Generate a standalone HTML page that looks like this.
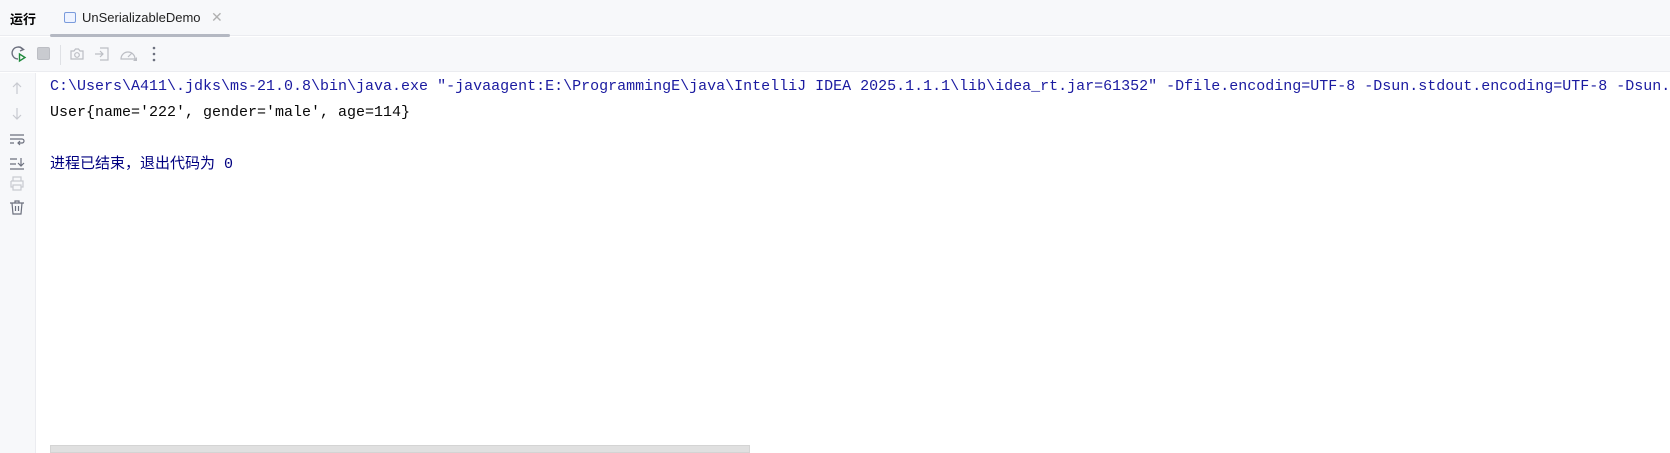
<!DOCTYPE html>
<html><head><meta charset="utf-8"><style>
*{margin:0;padding:0;box-sizing:border-box}
body{width:1670px;height:453px;overflow:hidden;background:#fff;font-family:"Liberation Sans","Noto Sans CJK SC",sans-serif;position:relative}
.tabbar{position:absolute;left:0;top:0;width:1670px;height:36px;background:#f7f8fa;border-bottom:1px solid #ebecf0}
.run{position:absolute;left:10px;top:9px;font-size:13px;color:#000;font-weight:bold}
.tab{position:absolute;left:50px;top:0;width:180px;height:36px}
.tab .ico{position:absolute;left:14px;top:12px;width:12px;height:11px;border:1px solid #7a9bdc;border-radius:2px;background:#eef3ff}
.tab .t{position:absolute;left:32px;top:10px;font-size:13px;color:#222}
.tab .x{position:absolute;left:161px;top:9px;font-size:14px;color:#b0b0b0}
.tab .ul{position:absolute;left:0;bottom:-1px;width:180px;height:3px;background:#b4b8c2;border-radius:2px}
.toolbar{position:absolute;left:0;top:37px;width:1670px;height:35px;background:#f7f8fa;border-bottom:1px solid #ebecf0}
.gutter{position:absolute;left:0;top:73px;width:36px;height:380px;background:#f7f8fa;border-right:1px solid #ebecf0}
.con{position:absolute;left:50px;top:74px;width:1620px;overflow:hidden;font-family:"Liberation Mono","Noto Sans CJK SC",monospace;font-size:15px;line-height:26px;white-space:pre}
.b{color:#1a1aa0}.k{color:#080808}.n{color:#000080}
.sb{position:absolute;left:50px;top:445px;width:700px;height:8px;background:#e0e0e0;border:1px solid #d4d4d4}
svg{position:absolute}
</style></head><body>
<div class="tabbar"><div class="run">运行</div>
<div class="tab"><div class="ico"></div><div class="t">UnSerializableDemo</div><div class="x">✕</div><div class="ul"></div></div></div>
<div class="toolbar">
<svg style="left:10px;top:8px" width="18" height="18" viewBox="0 0 18 18"><path d="M13 4.5A6 6 0 1 0 8 14" fill="none" stroke="#6c707e" stroke-width="1.4"/><path d="M10 2l3.5 2.5L10 6" fill="none" stroke="#6c707e" stroke-width="1.4"/><path d="M9.5 9v7l5.5-3.5z" fill="none" stroke="#208a3c" stroke-width="1.4"/></svg>
<svg style="left:37px;top:10px" width="13" height="13"><rect x="0.5" y="0.5" width="12" height="12" rx="1.5" fill="#c9cbd0" stroke="#bcbec4"/></svg>
<div style="position:absolute;left:60px;top:8px;width:1px;height:20px;background:#dfe1e5"></div>
<svg style="left:69px;top:9px" width="16" height="16" viewBox="0 0 16 16"><path d="M2 5h3l1.5-2h3L11 5h3v8H2z" fill="none" stroke="#bcbec4" stroke-width="1.2"/><circle cx="8" cy="9" r="2.3" fill="none" stroke="#bcbec4" stroke-width="1.2"/></svg>
<svg style="left:94px;top:9px" width="16" height="16" viewBox="0 0 16 16"><path d="M6 2h8v12H6" fill="none" stroke="#bcbec4" stroke-width="1.2"/><path d="M1 8h8M6 5l3 3-3 3" fill="none" stroke="#bcbec4" stroke-width="1.2"/></svg>
<svg style="left:119px;top:9px" width="18" height="16" viewBox="0 0 18 16"><path d="M2 13a7 7 0 1 1 14 0z" fill="none" stroke="#bcbec4" stroke-width="1.2"/><path d="M9 11l4-4" stroke="#bcbec4" stroke-width="1.2"/><path d="M14 15h4v-4z" fill="#bcbec4"/></svg>
<svg style="left:152px;top:9px" width="4" height="16"><circle cx="2" cy="2" r="1.3" fill="#6c707e"/><circle cx="2" cy="8" r="1.3" fill="#6c707e"/><circle cx="2" cy="14" r="1.3" fill="#6c707e"/></svg>
</div>
<div class="gutter">
<svg style="left:10px;top:8px" width="14" height="14" viewBox="0 0 14 14"><path d="M7 13V2M3 6l4-4 4 4" fill="none" stroke="#c8cad0" stroke-width="1.2"/></svg>
<svg style="left:10px;top:34px" width="14" height="14" viewBox="0 0 14 14"><path d="M7 1v11M3 8l4 4 4-4" fill="none" stroke="#c8cad0" stroke-width="1.2"/></svg>
<svg style="left:9px;top:60px" width="16" height="14" viewBox="0 0 16 14"><path d="M1 2h14M1 6h12a2 2 0 0 1 0 4H9M11 8l-2 2 2 2M1 10h4" fill="none" stroke="#6c707e" stroke-width="1.2"/></svg>
<svg style="left:9px;top:84px" width="16" height="14" viewBox="0 0 16 14"><path d="M1 2h7M1 7h6M1 12h14M12 1v8M9 6l3 3 3-3" fill="none" stroke="#6c707e" stroke-width="1.2"/></svg>
<svg style="left:9px;top:103px" width="16" height="15" viewBox="0 0 16 15"><path d="M4 5V1h8v4M2 5h12v6h-2M4 11H2V5M4 9h8v5H4z" fill="none" stroke="#c8cad0" stroke-width="1.2"/></svg>
<svg style="left:9px;top:126px" width="16" height="16" viewBox="0 0 16 16"><path d="M1 4h14M6 4V2h4v2M3 4l1 11h8l1-11M6.5 7v5M9.5 7v5" fill="none" stroke="#6c707e" stroke-width="1.2"/></svg>
</div>
<div class="con"><span class="b">C:\Users\A411\.jdks\ms-21.0.8\bin\java.exe "-javaagent:E:\ProgrammingE\java\IntelliJ IDEA 2025.1.1.1\lib\idea_rt.jar=61352" -Dfile.encoding=UTF-8 -Dsun.stdout.encoding=UTF-8 -Dsun.</span>
<span class="k">User{name='222', gender='male', age=114}</span>

<span class="n">进程已结束，退出代码为 0</span></div>
<div class="sb"></div>
</body></html>
